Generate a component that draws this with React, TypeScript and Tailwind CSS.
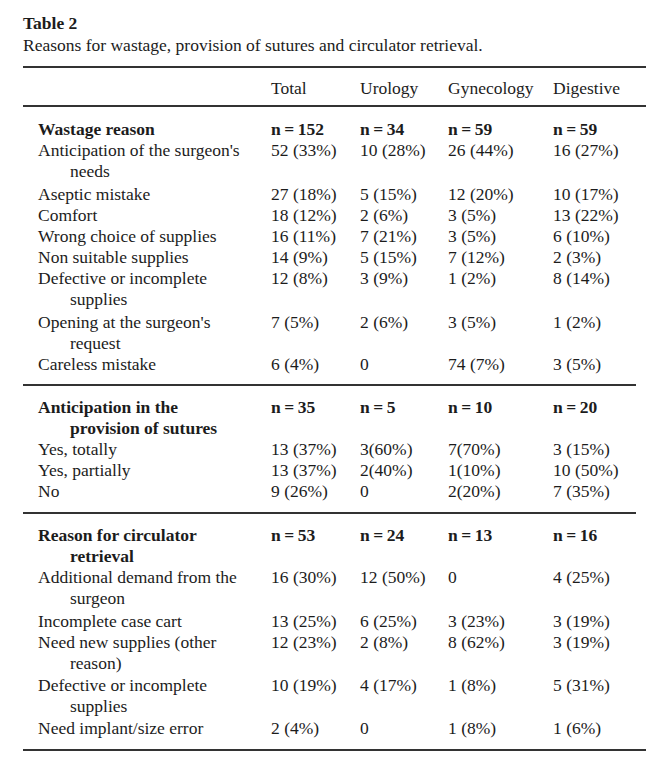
const cols = ["Total", "Urology", "Gynecology", "Digestive"];

type Row = { label: string[]; values: string[]; bold?: boolean; after?: 1 | 2 };

const sections: Row[][] = [
  [
    { label: ["Wastage reason"], values: ["n = 152", "n = 34", "n = 59", "n = 59"], bold: true },
    { label: ["Anticipation of the surgeon's", "needs"], values: ["52 (33%)", "10 (28%)", "26 (44%)", "16 (27%)"], after: 2 },
    { label: ["Aseptic mistake"], values: ["27 (18%)", "5 (15%)", "12 (20%)", "10 (17%)"] },
    { label: ["Comfort"], values: ["18 (12%)", "2 (6%)", "3 (5%)", "13 (22%)"] },
    { label: ["Wrong choice of supplies"], values: ["16 (11%)", "7 (21%)", "3 (5%)", "6 (10%)"] },
    { label: ["Non suitable supplies"], values: ["14 (9%)", "5 (15%)", "7 (12%)", "2 (3%)"] },
    { label: ["Defective or incomplete", "supplies"], values: ["12 (8%)", "3 (9%)", "1 (2%)", "8 (14%)"], after: 2 },
    { label: ["Opening at the surgeon's", "request"], values: ["7 (5%)", "2 (6%)", "3 (5%)", "1 (2%)"] },
    { label: ["Careless mistake"], values: ["6 (4%)", "0", "74 (7%)", "3 (5%)"] },
  ],
  [
    { label: ["Anticipation in the", "provision of sutures"], values: ["n = 35", "n = 5", "n = 10", "n = 20"], bold: true },
    { label: ["Yes, totally"], values: ["13 (37%)", "3(60%)", "7(70%)", "3 (15%)"] },
    { label: ["Yes, partially"], values: ["13 (37%)", "2(40%)", "1(10%)", "10 (50%)"] },
    { label: ["No"], values: ["9 (26%)", "0", "2(20%)", "7 (35%)"] },
  ],
  [
    { label: ["Reason for circulator", "retrieval"], values: ["n = 53", "n = 24", "n = 13", "n = 16"], bold: true },
    { label: ["Additional demand from the", "surgeon"], values: ["16 (30%)", "12 (50%)", "0", "4 (25%)"], after: 2 },
    { label: ["Incomplete case cart"], values: ["13 (25%)", "6 (25%)", "3 (23%)", "3 (19%)"] },
    { label: ["Need new supplies (other", "reason)"], values: ["12 (23%)", "2 (8%)", "8 (62%)", "3 (19%)"], after: 1 },
    { label: ["Defective or incomplete", "supplies"], values: ["10 (19%)", "4 (17%)", "1 (8%)", "5 (31%)"], after: 1 },
    { label: ["Need implant/size error"], values: ["2 (4%)", "0", "1 (8%)", "1 (6%)"] },
  ],
];

// section padding: top / bottom, tuned to the rules
const pads = ["pt-[12px] pb-[9px]", "pt-[11px] pb-[10px]", "pt-[11px] pb-[10px]"];

function TableRow({ row }: { row: Row }) {
  const extra = row.after === 2 ? "pb-[2px]" : row.after === 1 ? "pb-[1px]" : "";
  return (
    <div className={`grid grid-cols-[248px_89px_88px_105px_1fr] ${row.bold ? "font-bold" : ""} ${extra}`}>
      <div className="pl-[15px]">
        {row.label.map((line, i) => (
          <div key={line} className={i > 0 ? "pl-[32px]" : ""}>{line}</div>
        ))}
      </div>
      {row.values.map((v, i) => (
        <div key={i} className="whitespace-pre">{v.replace(" = ", "\u2009=\u2009")}</div>
      ))}
    </div>
  );
}

export default function App() {
  return (
    <div className="min-h-[770px] w-[664px] bg-white pl-[23px] pt-[13px] font-['Liberation_Serif',serif] text-[17.5px] leading-[21px] text-[#1c1c1c]">
      <div className="w-[623px]">
        <div className="font-bold">Table 2</div>
        <div className="mt-[1px]">Reasons for wastage, provision of sutures and circulator retrieval.</div>
        <div className="mt-[10px] h-[2px] bg-[#333]" />
        <div className="grid grid-cols-[248px_89px_88px_105px_1fr] pt-[10px] pb-[6px]">
          <div />
          {cols.map((c) => (
            <div key={c}>{c}</div>
          ))}
        </div>
        <div className="h-[2px] bg-[#333]" />
        {sections.map((rows, si) => (
          <div key={si}>
            <div className={pads[si]}>
              {rows.map((row, ri) => (
                <TableRow key={ri} row={row} />
              ))}
            </div>
            <div className={`h-[2px] bg-[#333] ${si === sections.length - 1 ? "w-[623px]" : "w-[613px]"}`} />
          </div>
        ))}
      </div>
    </div>
  );
}
